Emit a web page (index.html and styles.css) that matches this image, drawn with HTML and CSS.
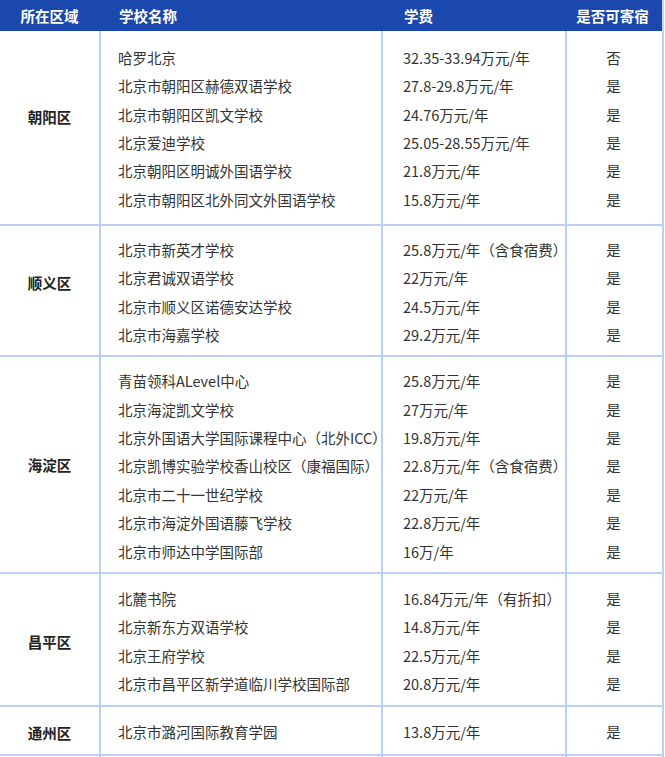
FILE: index.html
```html
<!DOCTYPE html>
<html lang="zh-CN">
<head>
<meta charset="utf-8">
<title>北京国际学校学费</title>
<link rel="stylesheet" href="styles.css">
</head>
<body>
<table class="schools">
  <colgroup>
    <col class="c-area"><col class="c-name"><col class="c-fee"><col class="c-board">
  </colgroup>
  <thead>
    <tr>
      <th class="area">所在区域</th>
      <th class="name">学校名称</th>
      <th class="fee">学费</th>
      <th class="board">是否可寄宿</th>
    </tr>
  </thead>
  <tbody>
    <tr class="group first">
      <td class="area up-lg">朝阳区</td>
      <td class="name">
        <div class="line">哈罗北京</div>
        <div class="line">北京市朝阳区赫德双语学校</div>
        <div class="line">北京市朝阳区凯文学校</div>
        <div class="line">北京爱迪学校</div>
        <div class="line">北京朝阳区明诚外国语学校</div>
        <div class="line">北京市朝阳区北外同文外国语学校</div>
      </td>
      <td class="fee">
        <div class="line">32.35-33.94万元/年</div>
        <div class="line">27.8-29.8万元/年</div>
        <div class="line">24.76万元/年</div>
        <div class="line">25.05-28.55万元/年</div>
        <div class="line">21.8万元/年</div>
        <div class="line">15.8万元/年</div>
      </td>
      <td class="board">
        <div class="line">否</div>
        <div class="line">是</div>
        <div class="line">是</div>
        <div class="line">是</div>
        <div class="line">是</div>
        <div class="line">是</div>
      </td>
    </tr>
    <tr class="group">
      <td class="area up-md">顺义区</td>
      <td class="name">
        <div class="line">北京市新英才学校</div>
        <div class="line">北京君诚双语学校</div>
        <div class="line">北京市顺义区诺德安达学校</div>
        <div class="line">北京市海嘉学校</div>
      </td>
      <td class="fee">
        <div class="line">25.8万元/年（含食宿费）</div>
        <div class="line">22万元/年</div>
        <div class="line">24.5万元/年</div>
        <div class="line">29.2万元/年</div>
      </td>
      <td class="board">
        <div class="line">是</div>
        <div class="line">是</div>
        <div class="line">是</div>
        <div class="line">是</div>
      </td>
    </tr>
    <tr class="group">
      <td class="area">海淀区</td>
      <td class="name">
        <div class="line">青苗领科ALevel中心</div>
        <div class="line">北京海淀凯文学校</div>
        <div class="line">北京外国语大学国际课程中心（北外ICC）</div>
        <div class="line">北京凯博实验学校香山校区（康福国际）</div>
        <div class="line">北京市二十一世纪学校</div>
        <div class="line">北京市海淀外国语藤飞学校</div>
        <div class="line">北京市师达中学国际部</div>
      </td>
      <td class="fee">
        <div class="line">25.8万元/年</div>
        <div class="line">27万元/年</div>
        <div class="line">19.8万元/年</div>
        <div class="line">22.8万元/年（含食宿费）</div>
        <div class="line">22万元/年</div>
        <div class="line">22.8万元/年</div>
        <div class="line">16万/年</div>
      </td>
      <td class="board">
        <div class="line">是</div>
        <div class="line">是</div>
        <div class="line">是</div>
        <div class="line">是</div>
        <div class="line">是</div>
        <div class="line">是</div>
        <div class="line">是</div>
      </td>
    </tr>
    <tr class="group roomy">
      <td class="area down-sm">昌平区</td>
      <td class="name">
        <div class="line">北麓书院</div>
        <div class="line">北京新东方双语学校</div>
        <div class="line">北京王府学校</div>
        <div class="line">北京市昌平区新学道临川学校国际部</div>
      </td>
      <td class="fee">
        <div class="line">16.84万元/年（有折扣）</div>
        <div class="line">14.8万元/年</div>
        <div class="line">22.5万元/年</div>
        <div class="line">20.8万元/年</div>
      </td>
      <td class="board">
        <div class="line">是</div>
        <div class="line">是</div>
        <div class="line">是</div>
        <div class="line">是</div>
      </td>
    </tr>
    <tr class="group roomy">
      <td class="area down-sm">通州区</td>
      <td class="name">
        <div class="line">北京市潞河国际教育学园</div>
      </td>
      <td class="fee">
        <div class="line">13.8万元/年</div>
      </td>
      <td class="board">
        <div class="line">是</div>
      </td>
    </tr>
    <tr class="group tail">
      <td class="area"></td>
      <td class="name"></td>
      <td class="fee"></td>
      <td class="board"></td>
    </tr>
  </tbody>
</table>
</body>
</html>
```

FILE: styles.css
```css
html, body {
  margin: 0;
  padding: 0;
  background: #ffffff;
}

body {
  font-family: "Noto Sans CJK SC", "Noto Sans", sans-serif;
  color: #333333;
}

.schools {
  width: 663px;
  border-collapse: collapse;
  table-layout: fixed;
}

.c-area { width: 100px; }
.c-name { width: 282px; }
.c-fee { width: 184px; }
.c-board { width: 97px; }

.schools thead th {
  height: 31px;
  padding: 0;
  background: #1b48ad;
  color: #ffffff;
  font-size: 14.5px;
  font-weight: 700;
  line-height: 31px;
  text-align: left;
  border-right: 2px solid #1b48ad;
}

.schools thead th.board {
  border-right: 2px solid #c3d6f6;
}

.schools th.area { text-align: center; }
.schools th.name { padding-left: 18px; }
.schools th.fee { padding-left: 21px; }
.schools th.board { text-align: center; padding-right: 4px; }

.group td {
  vertical-align: top;
  padding: 10px 0 6px;
  border: 2px solid #b9cff3;
  font-size: 14.5px;
}

.group td:first-child {
  border-left: none;
}

.group.first td {
  border-top: none;
  padding-top: 13px;
  padding-bottom: 10px;
}

.group.roomy td {
  padding-top: 11px;
  padding-bottom: 7px;
}

.group td.area {
  vertical-align: middle;
  text-align: center;
  font-weight: 700;
  color: #222222;
  padding-top: 0;
  padding-bottom: 0;
  font-size: 14.5px;
}

.group td.area.up-lg { padding-bottom: 22px; }
.group td.area.up-md { padding-bottom: 16px; }
.group td.area.down-sm { padding-top: 4px; }

.group td.name { padding-left: 17px; }
.group td.fee { padding-left: 20px; }
.group td.board { text-align: center; padding-right: 2px; }

.line {
  height: 28.35px;
  line-height: 28.35px;
  white-space: nowrap;
}

.group.tail td {
  height: 30px;
  padding: 0;
  border-bottom: none;
}
```
